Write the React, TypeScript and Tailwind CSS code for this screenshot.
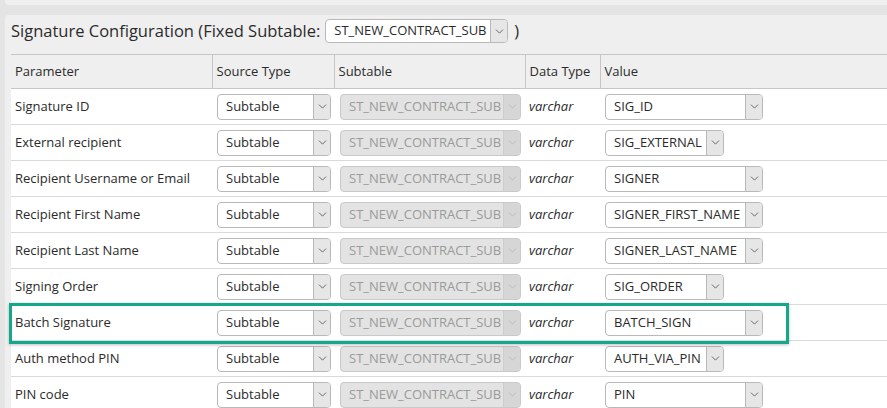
import { ChevronDown } from "lucide-react"

const rows = [
  { name: "Signature ID", value: "SIG_ID", wide: true },
  { name: "External recipient", value: "SIG_EXTERNAL", wide: false },
  { name: "Recipient Username or Email", value: "SIGNER", wide: true },
  { name: "Recipient First Name", value: "SIGNER_FIRST_NAME", wide: true },
  { name: "Recipient Last Name", value: "SIGNER_LAST_NAME", wide: true },
  { name: "Signing Order", value: "SIG_ORDER", wide: false },
  { name: "Batch Signature", value: "BATCH_SIGN", wide: true, highlight: true },
  { name: "Auth method PIN", value: "AUTH_VIA_PIN", wide: false },
  { name: "PIN code", value: "PIN", wide: true }
]

interface SelectBoxProps {
  label: string
  width: string
  disabled?: boolean
  height?: string
}

const SelectBox = ({ label, width, disabled, height = "h-[26px]" }: SelectBoxProps) => (
  <div
    className={`flex ${width} ${height} items-stretch overflow-hidden rounded-[4px] border ${
      disabled ? "border-[#c9c9c9] bg-[#e3e3e3] text-[#9a9a9a]" : "border-[#b9b9b9] bg-white text-[#2b2b2b]"
    }`}>
    <span className="flex grow items-center truncate pl-2 text-[13px]">{label}</span>
    <span
      className={`flex w-[17px] shrink-0 items-center justify-center border-l ${
        disabled ? "border-[#cdcdcd] bg-[#d6d6d6] text-[#b5b5b5]" : "border-[#b9b9b9] bg-[#e6e6e6] text-[#444]"
      }`}>
      <ChevronDown size={13} strokeWidth={1.4} />
    </span>
  </div>
)

export default function App() {
  return (
    <div
      className="h-[408px] w-[887px] overflow-hidden bg-[#e4e4e4]"
      style={{ fontFamily: '"Open Sans", "Noto Sans", sans-serif' }}>
      <div className="ml-[5px] h-[5px] w-[900px] rounded-b-[4px] bg-[#efefef]" />
      <div className="ml-[5px] mt-[10px] w-[900px] rounded-t-[4px] bg-[#efefef] pl-[6px] pt-[4px]">
        <div className="flex h-[24px] items-center text-[16.5px] text-[#2b2b2b]">
          <span>Signature Configuration (Fixed Subtable:</span>
          <div className="ml-[5px]">
            <SelectBox label="ST_NEW_CONTRACT_SUB" width="w-[183px]" height="h-[24px]" />
          </div>
          <span className="ml-[6px]">)</span>
        </div>
        <table className="mt-[11px] w-[900px] table-fixed border-collapse text-[13px] text-[#2b2b2b]">
          <colgroup>
            <col className="w-[201px]" />
            <col className="w-[122px]" />
            <col className="w-[191px]" />
            <col className="w-[75px]" />
            <col />
          </colgroup>
          <thead>
            <tr className="h-[34px] border-y border-[#c6c6c6] text-left">
              <th className="px-1 font-normal">Parameter</th>
              <th className="border-l border-[#c6c6c6] px-1 font-normal">Source Type</th>
              <th className="border-l border-[#c6c6c6] px-1 font-normal">Subtable</th>
              <th className="border-l border-[#c6c6c6] px-1 font-normal">Data Type</th>
              <th className="border-l border-[#c6c6c6] px-1 font-normal">Value</th>
            </tr>
          </thead>
          <tbody className="bg-white">
            {rows.map(row => (
              <tr key={row.name} className="h-[36px] border-b border-[#dadada]">
                <td className="relative px-1">
                  {row.highlight && (
                    <div className="pointer-events-none absolute left-[-2px] top-[-2px] h-[41px] w-[780px] border-[3px] border-[#14a78b] shadow-[0_1px_3px_rgba(0,0,0,0.25)]" />
                  )}
                  {row.name}
                </td>
                <td className="pl-[5px]">
                  <SelectBox label="Subtable" width="w-[114px]" />
                </td>
                <td className="pl-[6px]">
                  <SelectBox label="ST_NEW_CONTRACT_SUB" width="w-[181px]" disabled />
                </td>
                <td className="px-1 italic">varchar</td>
                <td className="pl-[5px]">
                  <SelectBox label={row.value} width={row.wide ? "w-[158px]" : "w-[119px]"} />
                </td>
              </tr>
            ))}
          </tbody>
        </table>
      </div>
    </div>
  )
}
